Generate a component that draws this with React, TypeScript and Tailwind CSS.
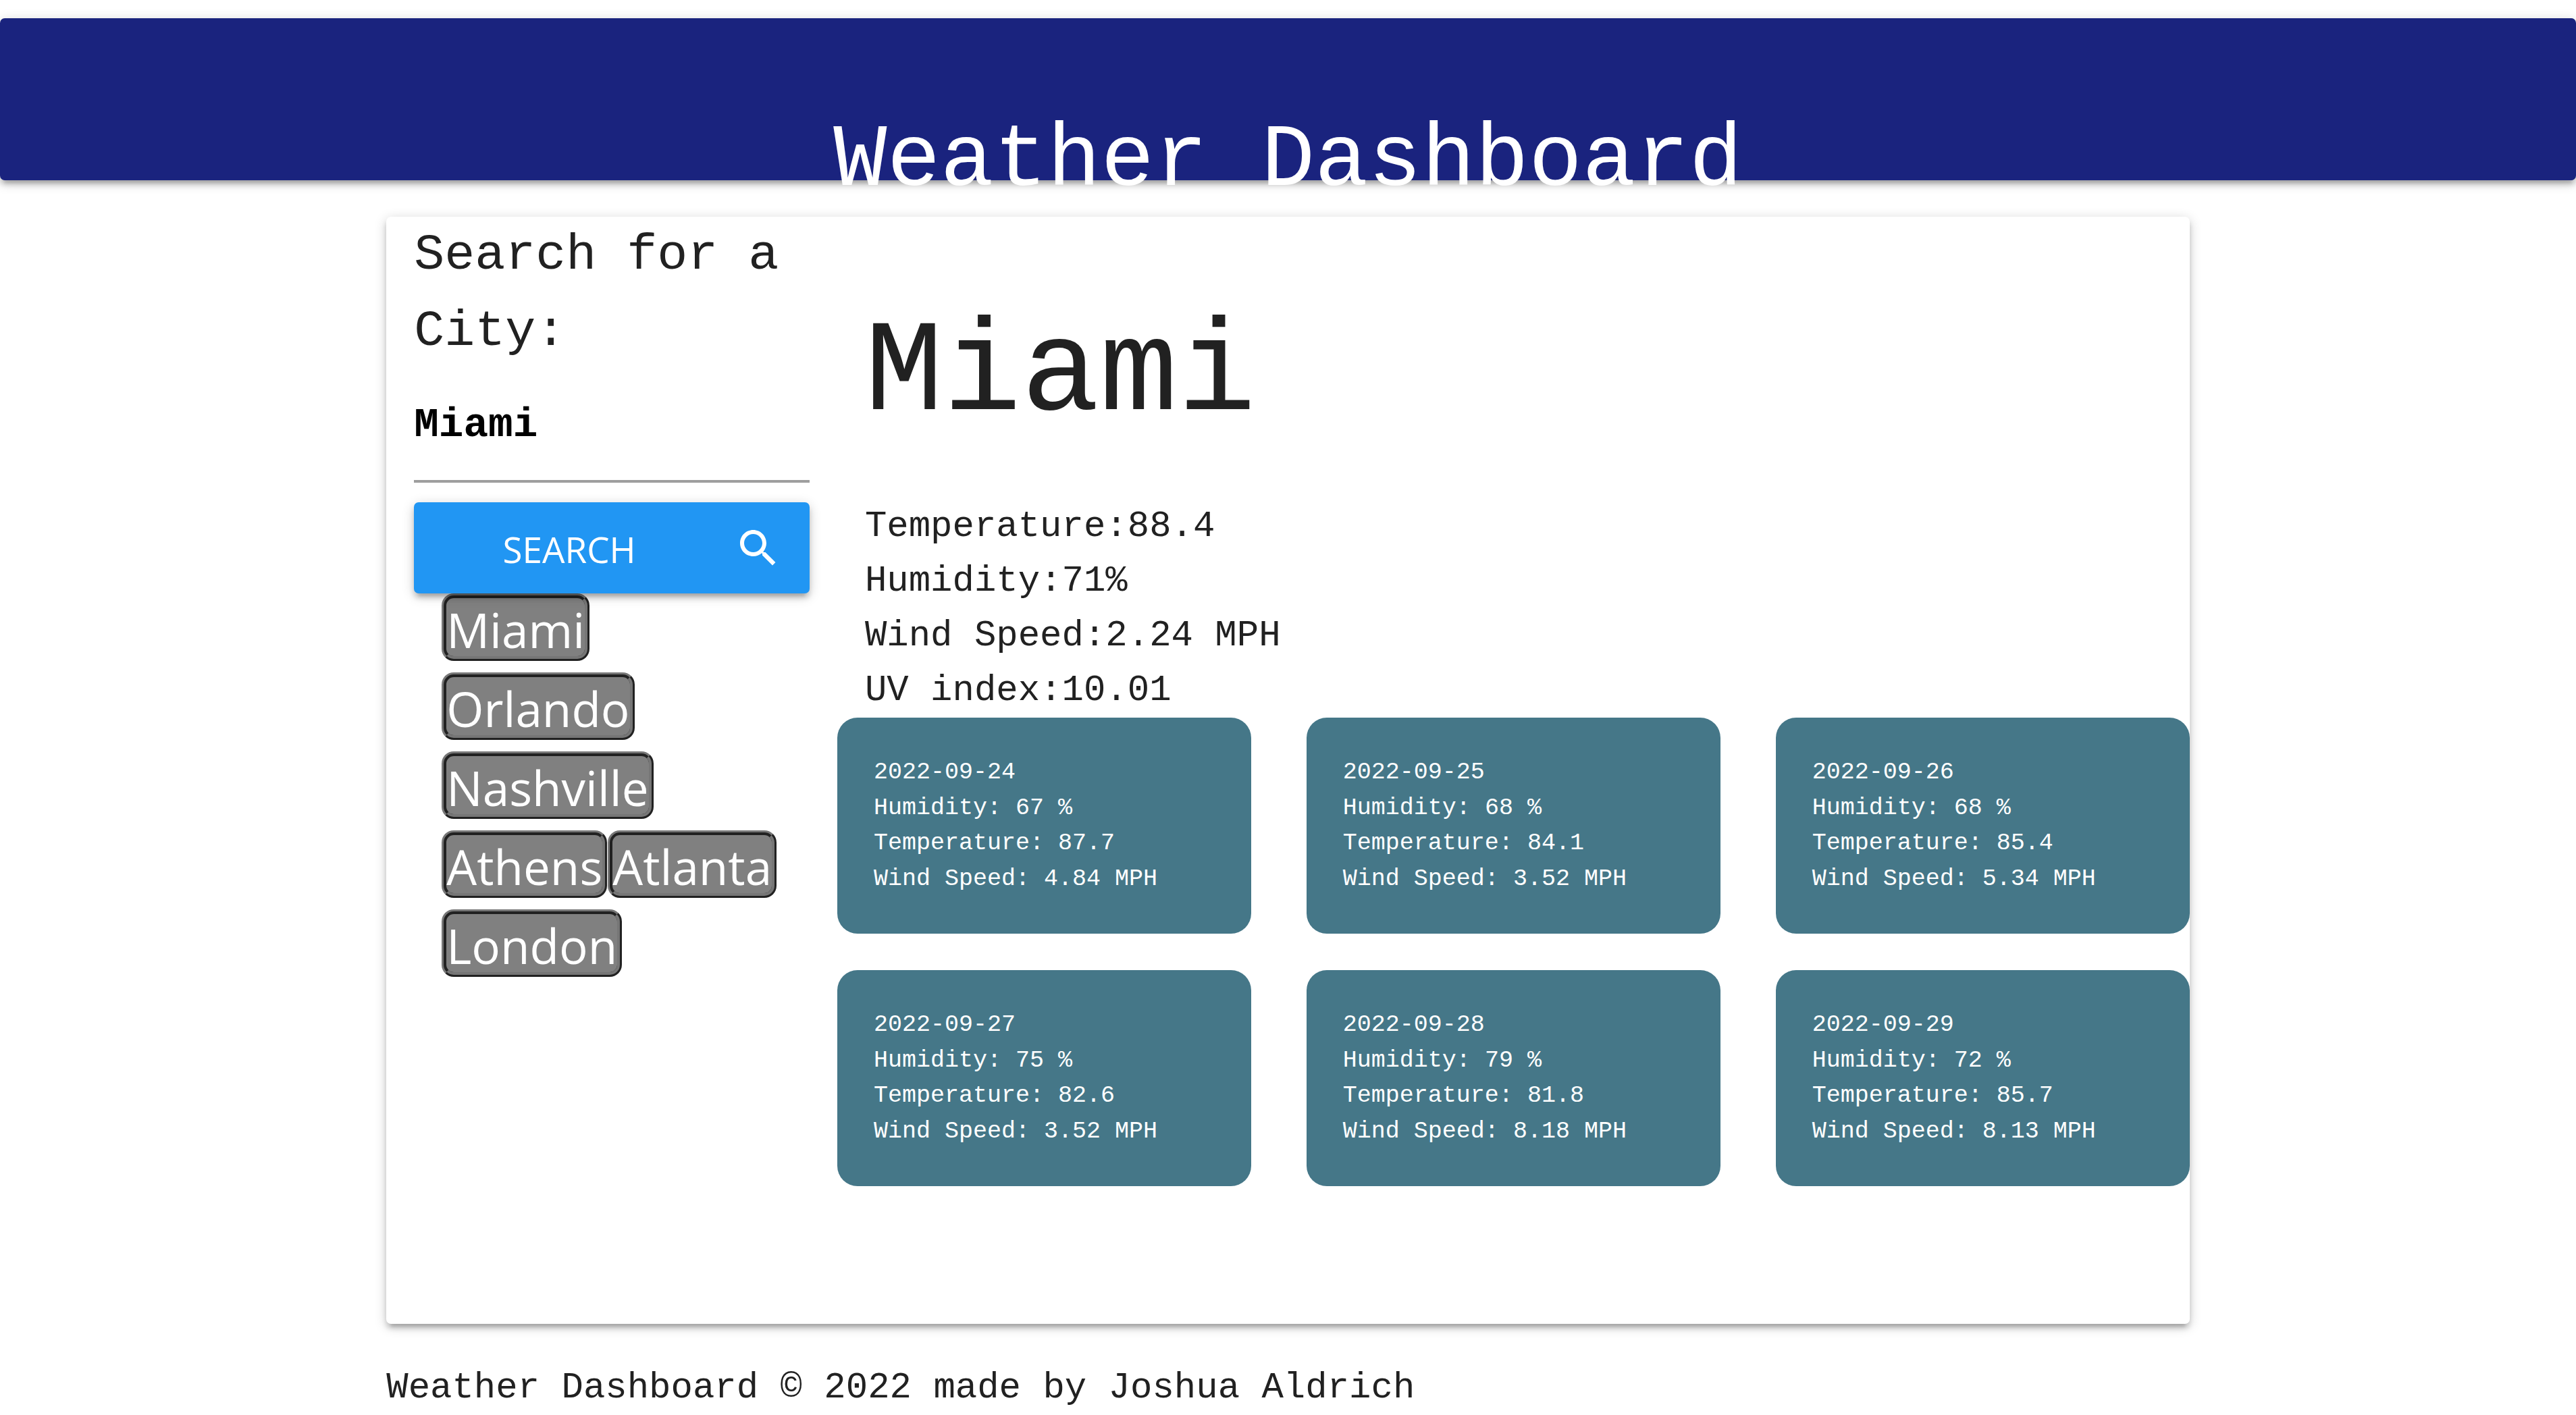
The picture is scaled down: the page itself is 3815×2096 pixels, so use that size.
import { useState } from "react";

const cities = ["Miami", "Orlando", "Nashville", "Athens", "Atlanta", "London"];

const conditions = [
  ["Temperature", "88.4"],
  ["Humidity", "71%"],
  ["Wind Speed", "2.24 MPH"],
  ["UV index", "10.01"],
];

const forecast = [
  { date: "2022-09-24", humidity: "67", temperature: "87.7", wind: "4.84" },
  { date: "2022-09-25", humidity: "68", temperature: "84.1", wind: "3.52" },
  { date: "2022-09-26", humidity: "68", temperature: "85.4", wind: "5.34" },
  { date: "2022-09-27", humidity: "75", temperature: "82.6", wind: "3.52" },
  { date: "2022-09-28", humidity: "79", temperature: "81.8", wind: "8.18" },
  { date: "2022-09-29", humidity: "72", temperature: "85.7", wind: "8.13" },
];

function SearchIcon() {
  return (
    <svg viewBox="0 0 24 24" className="size-[72px] shrink-0 fill-current" aria-hidden="true">
      <path d="M15.5 14h-.79l-.28-.27C15.41 12.59 16 11.11 16 9.5 16 5.91 13.09 3 9.5 3S3 5.91 3 9.5 5.91 16 9.5 16c1.61 0 3.09-.59 4.23-1.57l.27.28v.79l5 4.99L20.49 19l-4.99-5zm-6 0C7.01 14 5 11.99 5 9.5S7.01 5 9.5 5 14 7.01 14 9.5 11.99 14 9.5 14z" />
    </svg>
  );
}

export default function App() {
  const [query, setQuery] = useState("Miami");

  return (
    <div className="flow-root bg-white font-['Courier_New','Liberation_Mono',monospace] text-[54px] leading-normal text-[#212121]">
      <header className="mt-[27px] h-[240px] rounded-[7px] bg-[#1a237e] pt-[140px] text-center shadow-[0_7px_7px_rgba(0,0,0,0.14),0_11px_4px_-7px_rgba(0,0,0,0.12),0_4px_18px_rgba(0,0,0,0.2)]">
        <h1 className="text-[132px] leading-[144px] text-white">Weather Dashboard</h1>
      </header>

      <main className="mx-auto mt-[54px] grid w-[70%] grid-cols-4 rounded-[7px] bg-white shadow-[0_7px_7px_rgba(0,0,0,0.14),0_11px_4px_-7px_rgba(0,0,0,0.12),0_4px_18px_rgba(0,0,0,0.2)]">
        <aside className="px-[41px]">
          <form onSubmit={(e) => e.preventDefault()}>
            <label htmlFor="city" className="block pt-[2px] text-[75px]">
              Search for a City:
            </label>
            <input
              id="city"
              type="text"
              value={query}
              onChange={(e) => setQuery(e.target.value)}
              className="mb-[29px] block h-[167px] w-full border-b-4 border-[#9e9e9e] bg-transparent text-[61px] font-bold text-black outline-none"
            />
            <button
              type="submit"
              className="relative flex h-[135px] w-full items-center rounded-[7px] bg-[#2196f3] px-[40px] font-['Open_Sans',sans-serif] text-[53px] text-white shadow-[0_7px_7px_rgba(0,0,0,0.14),0_11px_4px_-7px_rgba(0,0,0,0.12),0_4px_18px_rgba(0,0,0,0.2)]"
            >
              <span className="mr-[54px] flex-1 pt-1 text-center">SEARCH</span>
              <SearchIcon />
            </button>
          </form>
          <ul className="flex flex-wrap gap-x-px gap-y-[17px] px-[41px]">
            {cities.map((city) => (
              <li key={city} className="flex">
                <button
                  type="button"
                  className="h-[100px] rounded-[18px] border-[7px] border-[#767676] bg-[#808080] pt-1 font-['Open_Sans',sans-serif] text-[71px] leading-[86px] text-white [border-style:ridge]"
                >
                  {city}
                </button>
              </li>
            ))}
          </ul>
        </aside>

        <section className="col-span-3 pb-[204px]">
          <div className="px-[41px]">
            <h2 className="pt-[128px] pb-[78px] text-[193px] leading-[212px]">Miami</h2>
            <ul>
              {conditions.map(([name, value]) => (
                <li key={name}>
                  {name}:{value}
                </li>
              ))}
            </ul>
          </div>
          <div className="grid grid-cols-3 gap-x-[82px] gap-y-[54px] text-[35px] text-white">
            {forecast.map((day) => (
              <article key={day.date} className="rounded-[30px] bg-[#457788] px-[54px] py-[55px]">
                <h3>{day.date}</h3>
                <p>Humidity: {day.humidity} %</p>
                <p>Temperature: {day.temperature}</p>
                <p>Wind Speed: {day.wind} MPH</p>
              </article>
            ))}
          </div>
        </section>
      </main>

      <footer className="mx-auto mt-[54px] w-[70%]">Weather Dashboard © 2022 made by Joshua Aldrich</footer>
    </div>
  );
}
